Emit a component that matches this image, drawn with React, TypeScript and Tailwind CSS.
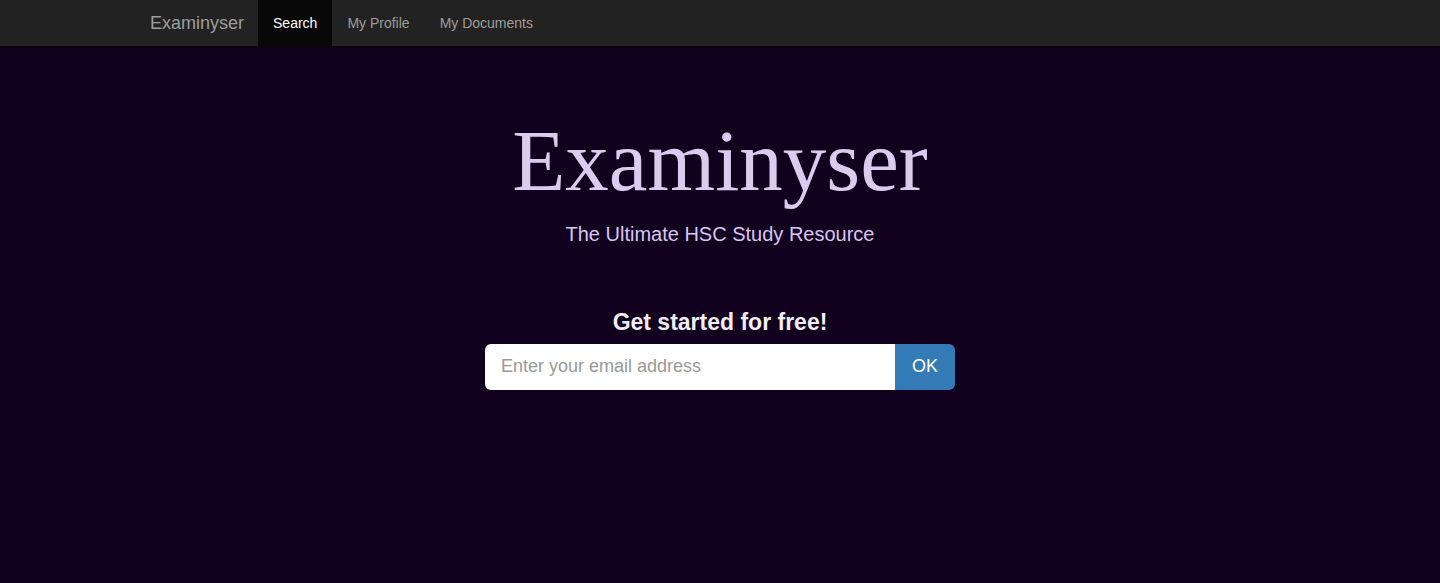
export default function App() {
  let links = [
    { title: "Search", active: true },
    { title: "My Profile", active: false },
    { title: "My Documents", active: false },
  ];
  return (
    <div className="min-h-[583px] bg-[#12001f] font-['Liberation_Sans',Arial,sans-serif]">
      <nav className="h-[47px] bg-[#222222] border-b border-[#080808]">
        <div className="w-[1170px] mx-auto px-[15px] flex h-full">
          <a className="h-full flex items-center pr-[14px] text-[18px] text-[#9d9d9d]">Examinyser</a>
          <ul className="flex h-full">
            {links.map((link) => (
              <li
                key={link.title}
                className={
                  link.active
                    ? "h-full flex items-center px-[15px] text-[14px] bg-[#080808] text-white"
                    : "h-full flex items-center px-[15px] text-[14px] text-[#9d9d9d]"
                }
              >
                {link.title}
              </li>
            ))}
          </ul>
        </div>
      </nav>

      <div className="flex flex-col items-center pt-[70px]">
        <h1 className="font-['Liberation_Serif',serif] text-[87px] leading-none text-[#dccbee]">
          Examinyser
        </h1>
        <p className="mt-[15px] text-[20px] text-[#d9c6f2]">The Ultimate HSC Study Resource</p>

        <h2 className="mt-[56px] text-[23px] font-bold text-[#f2eef6]">Get started for free!</h2>
        <div className="mt-[4px] flex w-[470px] h-[46px]">
          <input
            className="flex-1 bg-white rounded-l-[6px] px-4 text-[18px] text-[#555] placeholder:text-[#999] outline-none"
            placeholder="Enter your email address"
          />
          <button className="w-[60px] bg-[#337ab7] rounded-r-[6px] text-white text-[18px] font-medium">OK</button>
        </div>
      </div>
    </div>
  );
}
